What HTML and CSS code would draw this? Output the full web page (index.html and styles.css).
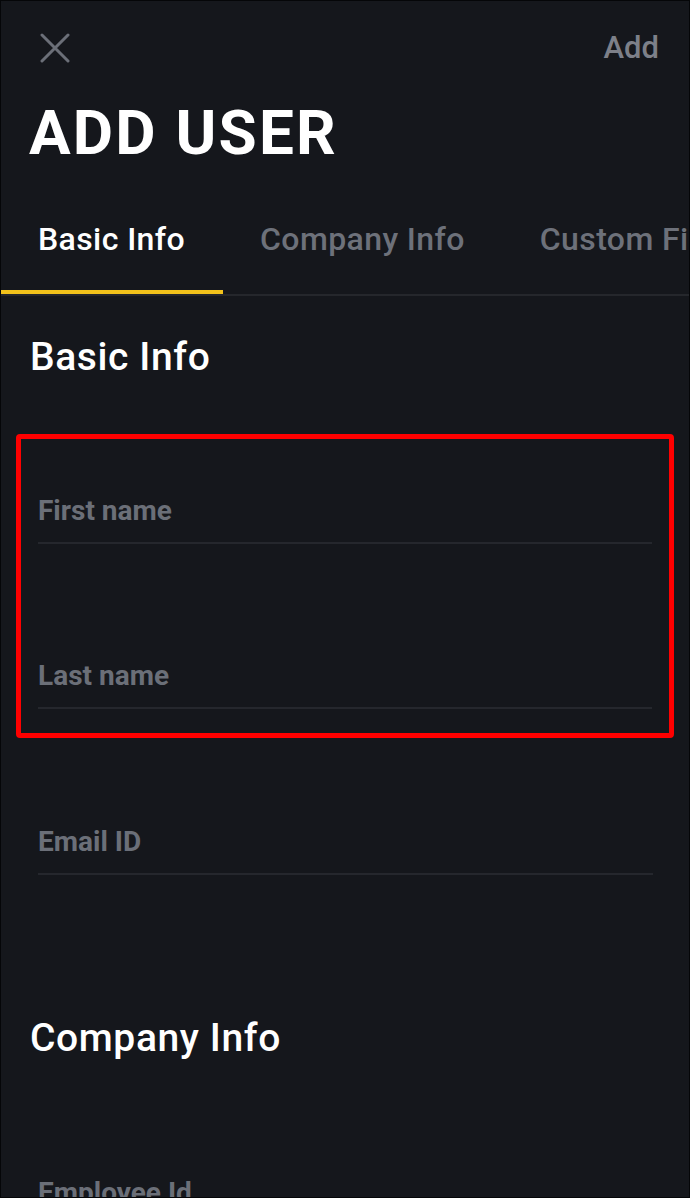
FILE: index.html
```html
<!DOCTYPE html>
<html lang="en">
<head>
<meta charset="utf-8">
<title>Add User</title>
<link rel="stylesheet" href="styles.css">
</head>
<body>
<div class="screen">
  <header class="topbar">
    <button class="icon-btn" aria-label="Close">
      <svg width="30" height="30" viewBox="0 0 30 30"><path d="M2 2 L28 28 M28 2 L2 28" stroke="#6b6f78" stroke-width="3" stroke-linecap="round" fill="none"/></svg>
    </button>
    <span class="action">Add</span>
  </header>
  <h1 class="title">ADD USER</h1>
  <nav class="tabs">
    <span class="tab active">Basic Info</span>
    <span class="tab">Company Info</span>
    <span class="tab">Custom Fields</span>
  </nav>
  <h2 class="section-title first">Basic Info</h2>
  <div class="highlight">
    <div class="field"><span class="label">First name</span></div>
    <div class="field gap"><span class="label">Last name</span></div>
  </div>
  <div class="field standalone email"><span class="label">Email ID</span></div>
  <h2 class="section-title company">Company Info</h2>
  <div class="field standalone employee"><span class="label">Employee Id</span></div>
</div>
</body>
</html>
```
FILE: styles.css
```css
* { box-sizing: border-box; }
html, body { margin: 0; padding: 0; background: #15171c; }
body { font-family: Roboto, "Liberation Sans", sans-serif; }
.screen {
  width: 690px;
  height: 1198px;
  overflow: hidden;
  border: 1px solid #050608;
  background: #15171c;
}
.topbar {
  height: 93px;
  display: flex;
  align-items: center;
  justify-content: space-between;
  padding: 0 30px 0 39px;
}
.icon-btn {
  background: none;
  border: 0;
  padding: 0;
  width: 30px;
  height: 30px;
  display: block;
}
.icon-btn svg { display: block; }
.action {
  color: #7d8089;
  font-size: 31px;
  font-weight: 500;
}
.title {
  margin: 8px 0 0;
  padding-left: 28px;
  color: #ffffff;
  font-size: 62px;
  line-height: 62px;
  font-weight: 700;
  letter-spacing: 2.2px;
}
.tabs {
  display: flex;
  white-space: nowrap;
  overflow: hidden;
  border-bottom: 2px solid #25272c;
}
.tab {
  padding: 60px 38px 35px 37px;
  font-size: 32px;
  line-height: 31px;
  font-weight: 500;
  letter-spacing: 0.4px;
  color: #6d717a;
  border-bottom: 4px solid transparent;
  flex: none;
}
.tab.active {
  color: #ffffff;
  border-bottom-color: #f2c21b;
}
.section-title {
  margin: 0;
  padding-left: 29px;
  color: #ffffff;
  font-size: 39px;
  line-height: 38px;
  font-weight: 500;
  letter-spacing: 0.6px;
}
.section-title.first { margin-top: 42px; }
.section-title.company { margin-top: 144px; }
.highlight {
  margin: 58px 15px 0;
  border: 5px solid #ff0000;
  border-radius: 4px;
  padding: 58px 17px 24px;
}
.field {
  padding-bottom: 17px;
  border-bottom: 2px solid #25272d;
}
.field.gap { margin-top: 118px; }
.field.standalone { margin-left: 37px; margin-right: 36px; }
.field.email { margin-top: 90px; }
.field.employee { margin-top: 122px; }
.label {
  display: block;
  color: #6b6f78;
  font-size: 28px;
  line-height: 28px;
  font-weight: 700;
}
```
